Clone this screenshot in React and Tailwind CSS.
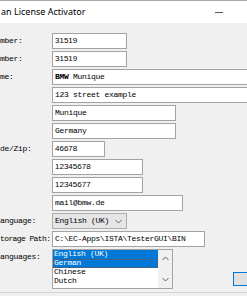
import React from "react";

function Label({ children, tight }) {
  return (
    <div className={`w-[52px] shrink-0 overflow-hidden whitespace-nowrap font-[family-name:Liberation_Mono,monospace] text-[8px] ${tight ? "tracking-[-0.6px]" : "tracking-[-0.3px]"} leading-[16px] text-black`}>
      {children}
    </div>
  );
}

function Box({ w, children, sans }) {
  return (
    <div
      className={`${w} h-[16px] shrink-0 border border-[#a3a3a3] bg-white pl-[2px] flex items-center whitespace-nowrap overflow-hidden text-black text-[8px] ${sans ? "font-[family-name:Liberation_Sans,Arial,sans-serif]" : "font-[family-name:Liberation_Mono,monospace] tracking-[-0.3px]"}`}
    >
      {children}
    </div>
  );
}

export default function App() {
  return (
    <div className="w-[247px] h-[296px] overflow-hidden bg-[#f0f0f0] flex flex-col">
      <div className="h-[23px] shrink-0 bg-white border-t border-[#a9a9a9] flex items-center justify-between">
        <span className="text-[9px] text-black pl-[1px] whitespace-nowrap font-[family-name:Noto_Sans,sans-serif]">an License Activator</span>
        <div className="w-[8px] h-[1px] bg-[#555] mr-[24px]" />
      </div>
      <div className="flex flex-col gap-[2px] mt-[10px]">
        <div className="flex"><Label>mber:</Label><Box w="w-[75px]" sans>31519</Box></div>
        <div className="flex"><Label>mber:</Label><Box w="w-[75px]" sans>31519</Box></div>
        <div className="flex"><Label>me:</Label><Box w="w-[210px]"><span className="font-bold">BMW</span>&nbsp;Munique</Box></div>
        <div className="flex"><Label></Label><Box w="w-[210px]">123 street example</Box></div>
        <div className="flex"><Label></Label><Box w="w-[124px]">Munique</Box></div>
        <div className="flex"><Label></Label><Box w="w-[124px]">Germany</Box></div>
        <div className="flex"><Label>de/Zip:</Label><Box w="w-[53px]" sans>46678</Box></div>
        <div className="flex"><Label></Label><Box w="w-[91px]" sans>12345678</Box></div>
        <div className="flex"><Label></Label><Box w="w-[91px]" sans>12345677</Box></div>
        <div className="flex"><Label></Label><Box w="w-[131px]">mail@bmw.de</Box></div>
        <div className="flex">
          <Label>anguage:</Label>
          <div className="w-[75px] h-[16px] border border-[#adadad] bg-[#e5e5e5] flex items-center justify-between pl-[2px] pr-[4px] text-[8px] tracking-[-0.3px] text-black whitespace-nowrap font-[family-name:Liberation_Mono,monospace]">
            <span>English (UK)</span>
            <svg width="7" height="5" viewBox="0 0 7 5" className="shrink-0"><polyline points="0.5,1 3.5,4 6.5,1" fill="none" stroke="#606060" strokeWidth="1" /></svg>
          </div>
        </div>
        <div className="flex"><Label tight>torage Path:</Label><Box w="w-[153px]">C:\EC-Apps\ISTA\TesterGUI\BIN</Box></div>
        <div className="flex">
          <Label>anguages:</Label>
          <div className="w-[121px] h-[40px] shrink-0 border border-[#a3a3a3] bg-white flex">
            <div className="flex-1 flex flex-col text-[8px] tracking-[-0.3px] leading-[8.7px] text-black whitespace-nowrap font-[family-name:Liberation_Mono,monospace]">
              <div className="bg-[#0078d7] text-white pl-[1px] h-[9px]">English (UK)</div>
              <div className="bg-[#0078d7] text-white pl-[1px] h-[9px] outline outline-1 outline-dotted outline-[#7a4d3a] -outline-offset-1">German</div>
              <div className="pl-[1px] h-[9px]">Chinese</div>
              <div className="pl-[1px] h-[9px]">Dutch</div>
            </div>
            <div className="w-[14px] bg-[#f0f0f0] flex flex-col items-center justify-between py-[6px]">
              <svg width="7" height="5" viewBox="0 0 7 5"><polyline points="0.5,4 3.5,1 6.5,4" fill="none" stroke="#606060" strokeWidth="1" /></svg>
              <svg width="7" height="5" viewBox="0 0 7 5"><polyline points="0.5,1 3.5,4 6.5,1" fill="none" stroke="#606060" strokeWidth="1" /></svg>
            </div>
          </div>
          <div className="ml-[60px] self-end mb-[3px] w-[60px] h-[14px] shrink-0 border border-[#0078d7] bg-[#e1e1e1]" />
        </div>
      </div>
      <div className="mt-[3px] border-t border-[#d4d4d4]" />
    </div>
  );
}
